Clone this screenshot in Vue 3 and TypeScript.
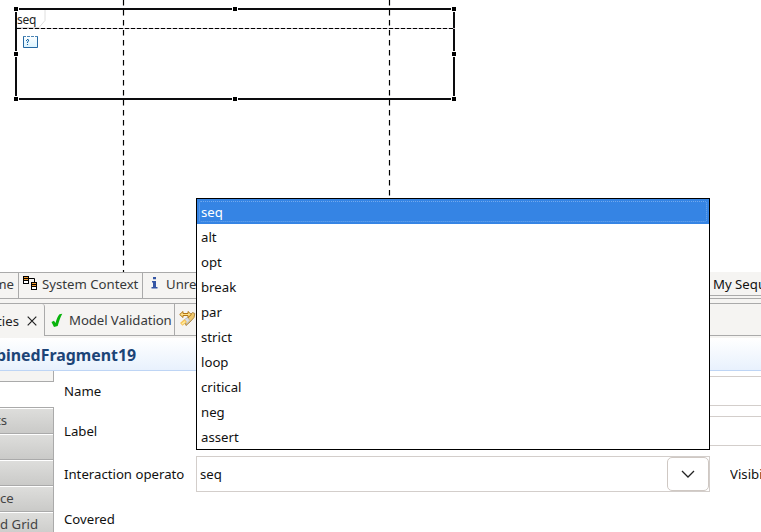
<script setup lang="ts">
import { ref } from 'vue'

interface Point { x: number; y: number }
interface Section { text: string; shifted?: boolean }

const operators: string[] = ['seq', 'alt', 'opt', 'break', 'par', 'strict', 'loop', 'critical', 'neg', 'assert']
const selected = ref<string>('seq')

const handles: Point[] = [
  { x: 16, y: 9 }, { x: 235, y: 9 }, { x: 454, y: 9 },
  { x: 16, y: 54 }, { x: 454, y: 54 },
  { x: 16, y: 99 }, { x: 235, y: 99 }, { x: 454, y: 99 },
]
const lifelines: number[] = [123.5, 389.5]
const sections: Section[] = [{ text: 'ts', shifted: true }, { text: '' }, { text: '' }, { text: 'ce' }, { text: 'd Grid' }]
</script>

<template>
  <main class="window">
    <svg class="canvas" width="761" height="272" viewBox="0 0 761 272">
      <defs>
        <linearGradient id="operand" x1="0" y1="0" x2="0" y2="1">
          <stop offset="0" stop-color="#ffffff" />
          <stop offset="1" stop-color="#d9f3ff" />
        </linearGradient>
      </defs>
      <path d="M17 27.500H39L45 20.500V10" fill="none" stroke="#dedede" />
      <text x="17" y="24" class="fragment-label">seq</text>
      <rect x="16" y="9" width="438" height="90" fill="none" stroke="#0c0c0e" stroke-width="2" />
      <path d="M17 28.500H455" stroke="#c2b8c2" />
      <path d="M17 28.500H455" stroke="#000" stroke-dasharray="4 2" />
      <path v-for="x in lifelines" :key="x" :d="`M${x} 0V272`" stroke="#000" stroke-width="1.2" stroke-dasharray="5.5 4.5" />
      <rect x="23" y="36" width="15" height="12" fill="url(#operand)" />
      <path d="M23.500 36V47.500H37.500V36" fill="none" stroke="#2568a3" />
      <path d="M23 36.500H38" stroke="#4b86b6" stroke-dasharray="3 1" />
      <path d="M26 40.500H27M27 39.500H28.500M28.500 40V41.500M27.500 41.500V43M27.500 44V45" fill="none" stroke="#1c68a6" stroke-width="1.1" />
      <g v-for="(h, i) in handles" :key="i">
        <rect :x="h.x - 3" :y="h.y - 3" width="6" height="6" fill="#fff" />
        <rect :x="h.x - 2" :y="h.y - 2" width="4" height="4" fill="#000" />
      </g>
    </svg>

    <nav class="tabs editors">
      <div class="tab first">me</div>
      <div class="tab context">
        <svg width="15" height="15" viewBox="0 0 15 15">
          <path d="M5 2.500H11.500V6" fill="none" stroke="#000" />
          <rect x=".5" y=".5" width="5" height="7" fill="#f39b2d" stroke="#000" />
          <path d="M1 2.500H5M1 4.500H5" stroke="#000" />
          <rect x="1" y="5" width="4" height="2" fill="#fff" />
          <rect x="8.500" y="6.500" width="5" height="7" fill="#f39b2d" stroke="#000" />
          <path d="M9 8.500H13M9 10.500H13" stroke="#000" />
          <rect x="9" y="11" width="4" height="2" fill="#fff" />
        </svg>
        <span>System Context</span>
      </div>
      <div class="tab info">
        <svg width="7" height="14" viewBox="0 0 7 14">
          <path d="M2 1H5V3.300H2ZM1 5H5V11H6.500V12.500H.5V11H2V6.500H1Z" fill="#3455a4" />
        </svg>
        <span>Unre</span>
      </div>
      <div class="tab current">My Sequ</div>
    </nav>
    <div class="sash"></div>
    <nav class="tabs views">
      <div class="tab properties">
        <span>ties</span>
        <svg width="10" height="10" viewBox="0 0 10 10"><path d="M.7.7L9.300 9.300M9.300.7L.7 9.300" stroke="#222" stroke-width="1.2" /></svg>
      </div>
      <div class="tab validation">
        <svg width="12" height="15" viewBox="0 0 12 15">
          <path d="M.5 9L3 7.800L4.500 10C5.500 6.500 7 2.500 8.500 1.300L11.300.8C9.300 4 8 9 6.700 13L3 14Z" fill="#08b30c" />
        </svg>
        <span>Model Validation</span>
      </div>
      <div class="tab references">
        <svg width="17" height="17" viewBox="0 0 17 17">
          <path d="M6 12L9.500 7L13.500 2.500L15.800 3.500L15 7.500L11 12L7 15.500Z" fill="#f1c96b" stroke="#a9864b" />
          <path d="M5.500 9.500L8.500 7.500L11 10.500L7.500 14Z" fill="#d9dde2" stroke="#a7a7a7" stroke-width=".7" />
          <path d="M1 13L5.500 9L8 12L3.500 15.800Z" fill="#f7c35a" />
          <path d="M3 14L6 11.500" stroke="#fff0a0" stroke-width="1.5" />
          <path d="M.7 4.500L4 1.500V3.500H9V1.500L12.300 4.500L9 7.500V5.500H4V7.500Z" fill="#ffe28a" stroke="#b27614" />
        </svg>
      </div>
    </nav>

    <header class="title"><h1>binedFragment19</h1></header>

    <section class="sheet">
      <aside class="sidebar">
        <div class="active-section"></div>
        <div v-for="(s, i) in sections" :key="i" class="section" :class="{ shifted: s.shifted }">{{ s.text }}</div>
      </aside>
      <form class="form" @submit.prevent>
        <div class="row name"><label>Name</label><div class="field"></div></div>
        <div class="row caption"><label>Label</label><div class="field"></div></div>
        <div class="row operator">
          <label>Interaction operato</label>
          <div class="combo">
            <span>{{ selected }}</span>
            <button type="button" class="arrow" aria-label="Open">
              <svg width="14" height="8" viewBox="0 0 14 8"><path d="M1 1L7 7L13 1" fill="none" stroke="#222" stroke-width="1.3" /></svg>
            </button>
          </div>
          <label class="visibility">Visibi</label>
        </div>
        <div class="row covered"><label>Covered</label></div>
      </form>
    </section>

    <ul class="menu">
      <li v-for="op in operators" :key="op" :class="{ selected: op === selected }" @click="selected = op"><span>{{ op }}</span></li>
    </ul>
  </main>
</template>

<style>
body { margin: 0; overflow: hidden; }
</style>

<style scoped>
* { box-sizing: border-box; }
.window {
  position: relative;
  display: flex;
  flex-direction: column;
  width: 761px;
  height: 532px;
  overflow: hidden;
  background: #fff;
  color: #111;
  font: 13.2px "Noto Sans", sans-serif;
  white-space: nowrap;
}
.canvas { display: block; flex: none; }
.fragment-label { font: 12px "Noto Sans", sans-serif; letter-spacing: -.2px; fill: #222; }
.tabs { display: flex; flex: none; background: #f5f4f2; }
.tab { display: flex; align-items: center; flex: none; overflow: hidden; color: #37393a; }
.editors { height: 27px; border-bottom: 1px solid #aaa; }
.editors .tab { border-top: 1px solid #aaa; border-right: 1px solid #aaa; padding-bottom: 3px; }
.editors .first { width: 19px; justify-content: flex-end; padding-right: 4px; }
.context { width: 124px; padding-left: 4px; gap: 4px; }
.context svg { margin-top: -1px; flex: none; }
.info { width: 567px; padding-left: 8px; gap: 8px; }
.info svg { margin-top: -2px; flex: none; }
.editors .current { width: 51px; height: 24px; padding: 1px 0 0 3px; border-top: 0; border-right: 0; border-bottom: 1px solid #aaa; color: #111; }
.sash { height: 4px; flex: none; background: #f5f4f2; }
.views { height: 33px; border-top: 1px solid #aaa; }
.views .tab { border-right: 1px solid #aaa; border-bottom: 1px solid #aaa; padding-top: 1px; }
.views .properties { width: 45px; border-bottom: 0; border-top-right-radius: 3px; justify-content: flex-end; gap: 8px; padding-right: 7px; color: #222; }
.properties svg { flex: none; }
.views .validation { width: 130px; padding-left: 6px; gap: 6px; letter-spacing: -.08px; }
.validation svg { flex: none; }
.views .references { flex: 1; border-right: 0; padding: 0 0 2px 4px; }
.title {
  height: 35px;
  flex: none;
  overflow: hidden;
  border-top: 2px solid #f5f4f2;
  border-bottom: 1px solid #bed5f5;
  background: linear-gradient(#fff, #e8f1fd);
}
.title h1 { margin: 0; padding-top: 1px; margin-left: -4px; font-size: 15.9px; line-height: 32px; color: #1c4477; }
.sheet { display: flex; flex: 1; min-height: 0; }
.sidebar { width: 64px; padding-right: 10px; overflow: hidden; }
.active-section { height: 11px; margin-bottom: 25px; background: #f5f4f2; border-right: 1px solid #aaa; border-bottom: 1px solid #aaa; }
.section {
  height: 26px;
  border-top: 1px solid #aaa;
  border-right: 1px solid #aaa;
  box-shadow: inset 0 1px #fff;
  background: linear-gradient(#dededc, #cacac8);
  line-height: 24px;
  color: #444;
}
.shifted { text-indent: -4px; }
.form { display: flex; flex-direction: column; flex: 1; min-width: 0; }
.row { display: flex; align-items: center; flex: none; }
.row label { width: 132px; flex: none; }
.field { flex: 1; height: 100%; border: 1px solid #d3cecb; border-right: 0; }
.name { height: 30px; margin-top: 5px; }
.caption { height: 30px; margin-top: 10px; }
.operator { height: 36px; margin-top: 10px; }
.covered { height: 30px; margin-top: 12px; }
.combo { display: flex; align-items: center; justify-content: space-between; flex: none; width: 514px; height: 36px; border: 1px solid #d3cecb; padding-left: 3px; }
.arrow { display: grid; place-items: center; width: 42px; height: 34px; padding: 0; background: #fff; border: 1px solid #cfc8c3; border-radius: 5px; }
.row .visibility { margin-left: 20px; width: 31px; overflow: hidden; }
.menu {
  position: absolute;
  left: 196px;
  top: 198px;
  width: 514px;
  height: 252px;
  margin: 0;
  padding: 0;
  list-style: none;
  background: #fff;
  border: 1px solid #000;
}
.menu li { height: 25px; padding: 2px; line-height: 21px; }
.menu li span { display: block; height: 21px; padding-left: 1px; border: 1px solid transparent; border-radius: 2px; line-height: 20px; }
.menu .selected { background: #3584e4; color: #fff; }
.menu .selected span { border: 1px dotted #72a9ed; }
</style>
